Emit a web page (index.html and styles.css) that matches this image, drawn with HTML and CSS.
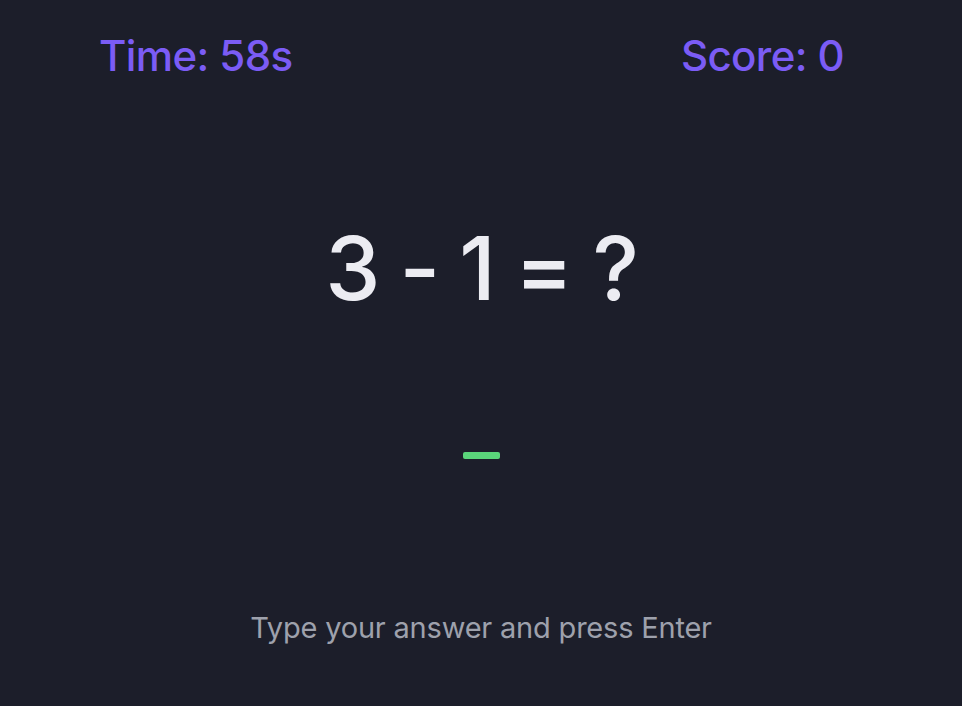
FILE: index.html
```html
<!DOCTYPE html>
<html lang="en">
<head>
<meta charset="utf-8">
<title>Math Game</title>
<link rel="stylesheet" href="styles.css">
</head>
<body>
<div class="game">
  <header class="stats">
    <div class="stat">Time: 58s</div>
    <div class="stat">Score: 0</div>
  </header>
  <main class="play">
    <div class="question">3 - 1 = ?</div>
    <div class="answer"><span class="cursor"></span></div>
  </main>
  <p class="hint">Type your answer and press Enter</p>
</div>
</body>
</html>
```
FILE: styles.css
```css
html, body {
  margin: 0;
  padding: 0;
  height: 100%;
}
body {
  background: #1c1e2a;
  font-family: Inter, "Liberation Sans", sans-serif;
  color: #f0f0f4;
}
.game {
  height: 706px;
  display: flex;
  flex-direction: column;
}
.stats {
  display: flex;
  justify-content: space-between;
  padding: 28px 118px 0 99px;
}
.stat {
  color: #7b5cf5;
  font-size: 42px;
  font-weight: 500;
  letter-spacing: -0.6px;
  line-height: 56px;
}
.play {
  display: flex;
  flex-direction: column;
  align-items: center;
}
.question {
  margin-top: 134px;
  font-size: 88px;
  font-weight: 500;
  letter-spacing: -2.2px;
  line-height: 100px;
  color: #ececf2;
}
.answer {
  margin-top: 134px;
  height: 40px;
  display: flex;
  justify-content: center;
}
.cursor {
  width: 37px;
  height: 7px;
  border-radius: 2px;
  background: #5ad57a;
}
.hint {
  margin: 119px 0 0;
  text-align: center;
  font-size: 29px;
  line-height: 34px;
  letter-spacing: -0.2px;
  color: #9ea1ac;
}
```
